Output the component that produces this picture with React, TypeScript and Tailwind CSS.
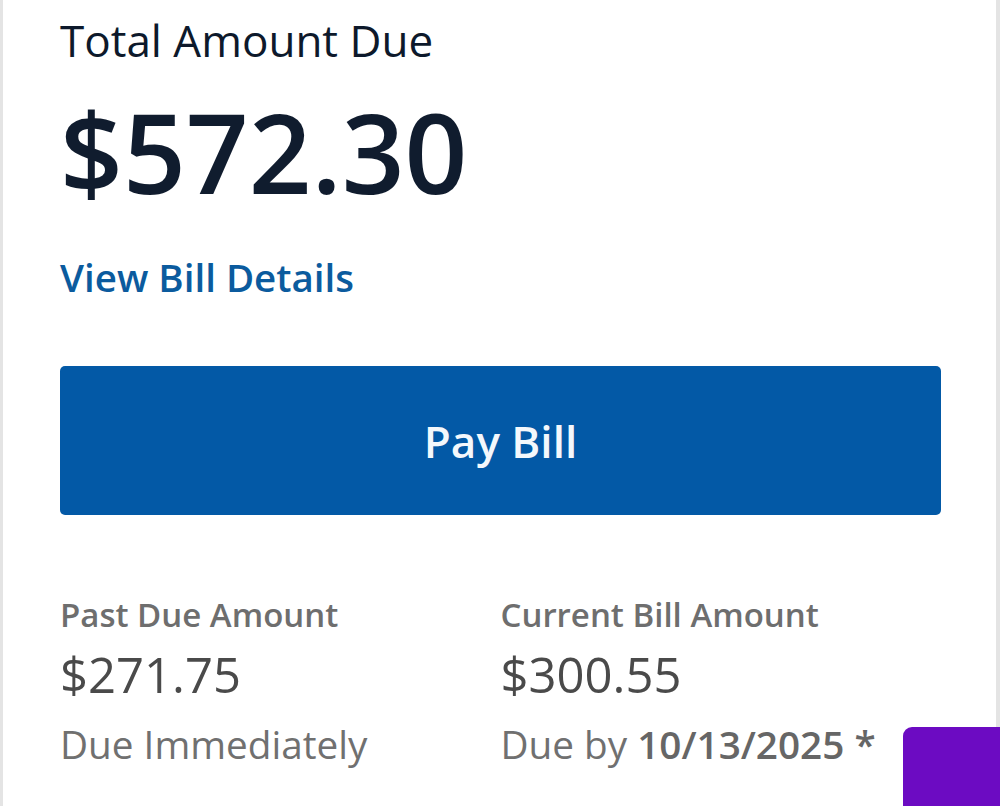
import React from "react";

const font = { fontFamily: '"Open Sans", "Noto Sans", sans-serif' };

function AmountColumn({ label, amount, children }: { label: string; amount: string; children: React.ReactNode }) {
    return (
        <div className="flex flex-col">
            <div className="text-[33px] leading-[40px] font-semibold text-[#6e6e6e]">{label}</div>
            <div className="mt-[11px] text-[49px] leading-[56px] text-[#4a4a4a]">{amount}</div>
            <div className="mt-[20px] text-[38.7px] leading-[44px] text-[#707070] whitespace-nowrap">{children}</div>
        </div>
    );
}

export default function App() {
    return (
        <div className="relative w-[1000px] h-[806px] overflow-hidden bg-white" style={font}>
            <div className="h-full border-l-[3px] border-r-[4px] border-[#e4e4e4] pl-[57px] pr-[55px] pt-[14px]">
                {/* Summary */}
                <div className="text-[44px] leading-[52px] text-[#0d192b]">Total Amount Due</div>
                <div className="mt-[30px] text-[110px] leading-[110px] font-semibold text-[#101c2e]">$572.30</div>
                <a href="#" className="block mt-[49px] text-[38.5px] leading-[44px] font-semibold text-[#0b5b9e]">
                    View Bill Details
                </a>

                <button className="mt-[67px] w-full h-[149px] rounded-[5px] bg-[#0359a6] text-[#f4f8fc] text-[44px] font-semibold">
                    Pay Bill
                </button>

                {/* Breakdown */}
                <div className="mt-[80px] grid grid-cols-2">
                    <AmountColumn label="Past Due Amount" amount="$271.75">
                        Due Immediately
                    </AmountColumn>
                    <AmountColumn label="Current Bill Amount" amount="$300.55">
                        Due by <span className="font-semibold text-[#666666]">10/13/2025 *</span>
                    </AmountColumn>
                </div>
            </div>

            {/* floating chat tab */}
            <div className="absolute left-[903px] top-[727px] w-[110px] h-[100px] rounded-tl-[9px] bg-[#6c0bc2]" />
        </div>
    );
}
